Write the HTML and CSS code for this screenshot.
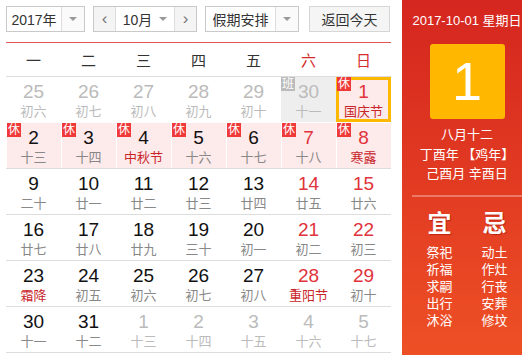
FILE: index.html
```html
<!DOCTYPE html>
<html lang="zh-CN">

<head>
    <meta charset="UTF-8">
    <title>万年历</title>
    <link rel="stylesheet" href="styles.css">
</head>

<body>
    <div class="calendar">
        <div class="main">
            <div class="toolbar">
                <div class="select year">
                    <span class="select-text">2017年</span>
                    <span class="select-arrow"><i class="caret"></i></span>
                </div>
                <div class="month-group">
                    <span class="nav-btn">&lsaquo;</span>
                    <div class="month-select">
                        <span>10月</span>
                        <i class="caret"></i>
                    </div>
                    <span class="nav-btn">&rsaquo;</span>
                </div>
                <div class="select holiday">
                    <span class="select-text">假期安排</span>
                    <span class="select-arrow"><i class="caret"></i></span>
                </div>
                <button class="today-btn">返回今天</button>
            </div>

            <div class="weekdays">
                <span>一</span><span>二</span><span>三</span><span>四</span><span>五</span>
                <span class="weekend">六</span><span class="weekend">日</span>
            </div>

            <div class="grid" id="grid"></div>
        </div>

        <div class="side">
            <div class="side-date">2017-10-01 星期日</div>
            <div class="big-day">1</div>
            <div class="lunar-info">
                <p>八月十二</p>
                <p>丁酉年 【鸡年】</p>
                <p>己酉月 辛酉日</p>
            </div>
            <div class="almanac">
                <div class="almanac-col">
                    <h3>宜</h3>
                    <p>祭祀</p>
                    <p>祈福</p>
                    <p>求嗣</p>
                    <p>出行</p>
                    <p>沐浴</p>
                </div>
                <div class="almanac-col">
                    <h3>忌</h3>
                    <p>动土</p>
                    <p>作灶</p>
                    <p>行丧</p>
                    <p>安葬</p>
                    <p>修坟</p>
                </div>
            </div>
        </div>
    </div>

    <script>
        // [day, lunar, flags]  flags: o = other month, w = weekend, f = festival,
        // r = rest badge, b = work badge, s = selected
        const days = [
            [25, '初六', 'o'], [26, '初七', 'o'], [27, '初八', 'o'], [28, '初九', 'o'], [29, '初十', 'o'], [30, '十一', 'ob'], [1, '国庆节', 'wfrs'],
            [2, '十三', 'r'], [3, '十四', 'r'], [4, '中秋节', 'fr'], [5, '十六', 'r'], [6, '十七', 'r'], [7, '十八', 'wr'], [8, '寒露', 'wfr'],
            [9, '二十', ''], [10, '廿一', ''], [11, '廿二', ''], [12, '廿三', ''], [13, '廿四', ''], [14, '廿五', 'w'], [15, '廿六', 'w'],
            [16, '廿七', ''], [17, '廿八', ''], [18, '廿九', ''], [19, '三十', ''], [20, '初一', ''], [21, '初二', 'w'], [22, '初三', 'w'],
            [23, '霜降', 'f'], [24, '初五', ''], [25, '初六', ''], [26, '初七', ''], [27, '初八', ''], [28, '重阳节', 'wf'], [29, '初十', 'w'],
            [30, '十一', ''], [31, '十二', ''], [1, '十三', 'o'], [2, '十四', 'o'], [3, '十五', 'o'], [4, '十六', 'o'], [5, '十七', 'o']
        ];

        const grid = document.getElementById('grid');

        for (let r = 0; r < 6; r++) {
            const row = document.createElement('div');
            row.className = 'row';
            for (let c = 0; c < 7; c++) {
                const [num, lunar, flags] = days[r * 7 + c];
                const cell = document.createElement('div');
                cell.className = 'cell';
                if (flags.includes('o')) cell.classList.add('other');
                if (flags.includes('w')) cell.classList.add('weekend');
                if (flags.includes('f')) cell.classList.add('festival');
                if (flags.includes('r')) cell.classList.add('rest');
                if (flags.includes('b')) cell.classList.add('work');
                if (flags.includes('s')) cell.classList.add('selected');

                let badge = '';
                if (flags.includes('r')) badge = '<span class="badge">休</span>';
                if (flags.includes('b')) badge = '<span class="badge">班</span>';

                cell.innerHTML = badge +
                    '<span class="num">' + num + '</span>' +
                    '<span class="lunar">' + lunar + '</span>';
                row.appendChild(cell);
            }
            grid.appendChild(row);
        }
    </script>
</body>

</html>
```

FILE: styles.css
```css
body {
    margin: 0;
    padding: 0;
    background: #fff;
    font-family: "Liberation Sans", "Noto Sans CJK SC", sans-serif;
    color: #333;
}

.calendar {
    display: flex;
    width: 522px;
    height: 355px;
    overflow: hidden;
}

.main {
    width: 385px;
    padding-left: 6px;
    margin-right: 11px;
}

/* toolbar */
.toolbar {
    display: flex;
    align-items: center;
    margin-top: 6px;
    height: 26px;
    padding-bottom: 10px;
    border-bottom: 1px solid #e05555;
}

.select {
    display: flex;
    height: 24px;
    border: 1px solid #c9c9c9;
    background: #fff;
    font-size: 14px;
    color: #333;
}

.select-text {
    display: flex;
    align-items: center;
    justify-content: center;
    border-right: 1px solid #ddd;
}

.select-arrow {
    display: flex;
    align-items: center;
    justify-content: center;
    width: 22px;
    background: #fafafa;
}

.caret {
    display: inline-block;
    width: 0;
    height: 0;
    border-left: 4px solid transparent;
    border-right: 4px solid transparent;
    border-top: 4px solid #999;
}

.year {
    width: 77px;
}

.year .select-text {
    width: 54px;
}

.holiday {
    width: 92px;
    margin-left: 8px;
}

.holiday .select-text {
    width: 69px;
}

.month-group {
    display: flex;
    height: 24px;
    width: 102px;
    margin-left: 8px;
    border: 1px solid #c9c9c9;
    font-size: 14px;
}

.nav-btn {
    display: flex;
    align-items: center;
    justify-content: center;
    width: 21px;
    background: #f4f4f4;
    color: #777;
    font-size: 17px;
}

.month-select {
    display: flex;
    align-items: center;
    justify-content: center;
    gap: 7px;
    width: 58px;
    border-left: 1px solid #ddd;
    border-right: 1px solid #ddd;
    background: #fff;
}

.today-btn {
    margin-left: 10px;
    width: 81px;
    height: 26px;
    padding: 0;
    border: 1px solid #d6d6d6;
    background: #f5f5f5;
    font-family: inherit;
    font-size: 14px;
    color: #333;
}

/* weekday header */
.weekdays {
    display: grid;
    grid-template-columns: repeat(7, 55px);
    height: 33px;
    align-items: center;
    border-bottom: 1px solid #ddd;
    font-size: 15px;
    text-align: center;
    color: #333;
}

.weekdays .weekend {
    color: #d62c2c;
}

/* day grid */
.row {
    display: grid;
    grid-template-columns: repeat(7, 55px);
    height: 45px;
    border-bottom: 1px solid #ddd;
}

.row:first-child {
    border-bottom-color: transparent;
}

.cell {
    position: relative;
    display: flex;
    flex-direction: column;
    align-items: center;
    padding-top: 4px;
    box-sizing: border-box;
}

.num {
    font-size: 19px;
    line-height: 22px;
    color: #111;
}

.lunar {
    font-size: 13px;
    line-height: 18px;
    color: #888;
}

.weekend .num {
    color: #e0333b;
}

.festival .lunar {
    color: #c9252b;
}

.other .num,
.other .lunar {
    color: #bbb;
}

.rest {
    background: #fdeaea;
    box-shadow: inset 1px 0 0 #fff;
}

.work {
    background: #eeeeee;
}

.badge {
    position: absolute;
    top: 0;
    left: 1px;
    width: 14px;
    height: 14px;
    background: #f03a3a;
    color: #fff;
    font-size: 12px;
    line-height: 14px;
    text-align: center;
}

.work .badge {
    left: 0;
    background: #bbb;
}

.selected {
    box-shadow: inset 0 0 0 3px #ffb800;
}

.selected .num {
    color: #e0333b;
}

/* right panel */
.side {
    flex: 1;
    height: 355px;
    padding-left: 10px;
    background: linear-gradient(to bottom, #d5261f 0%, #e13a22 50%, #ee5025 100%);
    color: #fff;
    text-align: center;
}

.side-date {
    margin-top: 12px;
    font-size: 13px;
    line-height: 17px;
}

.big-day {
    width: 75px;
    height: 75px;
    margin: 15px auto 0;
    border-radius: 3px;
    background: #ffb700;
    font-size: 54px;
    line-height: 75px;
    color: #fff;
}

.lunar-info {
    margin-top: 6px;
    padding-bottom: 11px;
    border-bottom: 2px solid #ec7a66;
}

.lunar-info p {
    margin: 0;
    font-size: 13px;
    line-height: 19.5px;
}

.almanac {
    display: flex;
}

.almanac-col {
    flex: 1;
}

.almanac h3 {
    margin: 14px 0 7px;
    font-size: 24px;
    line-height: 26px;
    font-weight: bold;
    text-shadow: 1px 1px 1px rgba(120, 0, 0, 0.4);
}

.almanac p {
    margin: 0;
    font-size: 13px;
    line-height: 17px;
}
```
